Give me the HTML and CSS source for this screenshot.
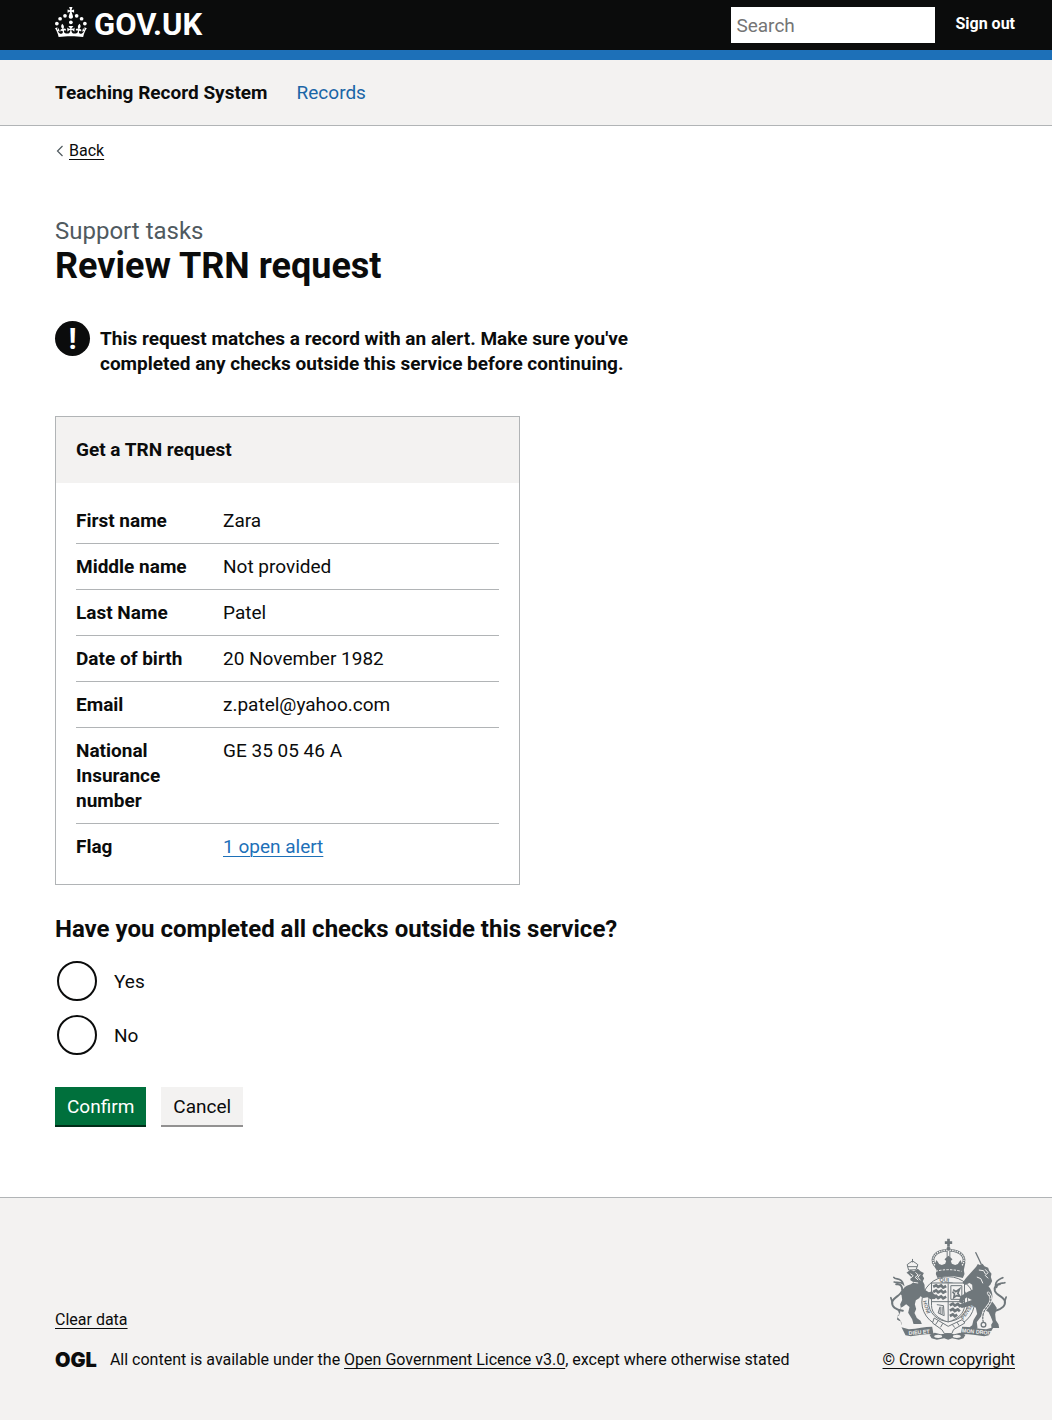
FILE: index.html
```html
<!DOCTYPE html>
<html lang="en">
<head>
<meta charset="utf-8">
<meta name="viewport" content="width=device-width, initial-scale=1">
<title>Review TRN request</title>
<link rel="stylesheet" href="styles.css">
</head>
<body>
<header class="header">
  <div class="container header-inner">
    <a class="logo" href="#">
      <svg class="crown" viewBox="0 0 64 60" aria-hidden="true" fill="currentColor"><circle cx="20" cy="17.6" r="3.7"/><circle cx="10.2" cy="23.5" r="3.7"/><circle cx="3.7" cy="33.2" r="3.7"/><circle cx="31.7" cy="30.6" r="3.7"/><circle cx="43.3" cy="17.6" r="3.7"/><circle cx="53.2" cy="23.5" r="3.7"/><circle cx="59.7" cy="33.2" r="3.7"/><path d="M33.1,9.8c.2-.1.3-.3.5-.5l4.6,2.4v-6.8l-4.6,1.5c-.1-.2-.3-.3-.5-.5l1.9-5.9h-6.7l1.9,5.9c-.2.1-.3.3-.5.5l-4.6-1.5v6.8l4.6-2.4c.1.2.3.3.5.5l-2.6,8c-.9,2.8,1.2,5.7,4.1,5.7h0c3,0,5.1-2.9,4.1-5.7l-2.6-8ZM37,37.9s-3.4,3.8-4.1,6.1c2.2,0,4.2-.5,6.4-2.8l-.7,8.5c-2-2.8-4.4-4.1-5.7-3.8.1,3.1.5,6.7,5.8,7.2,3.7.3,6.7-1.5,7-3.8.4-2.6-2-4.3-3.7-1.6-1.4-4.5,2.4-6.1,4.9-3.2-1.9-4.5-1.8-7.7,2.4-10.9,3,4,2.6,7.3-1.2,11.1,2.4-1.3,6.2,0,4,4.6-1.2-2.8-3.7-2.2-4.2.2-.3,1.7.7,3.7,3,4.2,1.9.3,4.7-.9,7-5.9-1.3,0-2.4.7-3.9,1.7l2.4-8c.6,2.3,1.4,3.7,2.2,4.5.6-1.6.5-2.8,0-5.3l5,1.8c-2.6,3.6-5.2,8.7-7.3,17.5-7.4-1.1-15.7-1.7-24.5-1.7h0c-8.8,0-17.1.6-24.5,1.7-2.1-8.9-4.7-13.9-7.3-17.5l5-1.8c-.5,2.5-.6,3.7,0,5.3.8-.8,1.6-2.3,2.2-4.5l2.4,8c-1.5-1-2.6-1.7-3.9-1.7,2.3,5,5.2,6.2,7,5.9,2.3-.4,3.3-2.4,3-4.2-.5-2.4-3-3.1-4.2-.2-2.2-4.6,1.6-6,4-4.6-3.7-3.7-4.2-7.1-1.2-11.1,4.2,3.2,4.3,6.4,2.4,10.9,2.5-2.8,6.3-1.3,4.9,3.2-1.8-2.7-4.1-1-3.7,1.6.3,2.3,3.3,4.1,7,3.8,5.4-.5,5.7-4.2,5.8-7.2-1.3-.2-3.7,1-5.7,3.8l-.7-8.5c2.2,2.3,4.2,2.7,6.4,2.8-.7-2.3-4.1-6.1-4.1-6.1h10.6Z"/></svg>
      <span class="logo-text">GOV.UK</span>
    </a>
    <form class="search" role="search">
      <input class="search-input" type="search" placeholder="Search" aria-label="Search">
    </form>
    <a class="sign-out" href="#">Sign out</a>
  </div>
</header>
<nav class="service-nav" aria-label="Service">
  <div class="container service-nav-inner">
    <span class="service-name">Teaching Record System</span>
    <a class="service-link" href="#">Records</a>
  </div>
</nav>
<div class="container">
  <a class="back" href="#">
    <svg class="back-arrow" viewBox="0 0 7 12" aria-hidden="true"><path d="M6.500 1 1.500 6l5 5" fill="none" stroke="#505a5f" stroke-width="1.200"/></svg>
    <span class="back-text">Back</span>
  </a>
  <main class="main">
    <span class="caption">Support tasks</span>
    <h1 class="title">Review TRN request</h1>
    <div class="warning">
      <span class="warning-icon" aria-hidden="true">!</span>
      <strong class="warning-text">This request matches a record with an alert. Make sure you've completed any checks outside this service before continuing.</strong>
    </div>
    <section class="card">
      <h2 class="card-title">Get a TRN request</h2>
      <dl class="summary">
        <div class="row"><dt>First name</dt><dd>Zara</dd></div>
        <div class="row"><dt>Middle name</dt><dd>Not provided</dd></div>
        <div class="row"><dt>Last Name</dt><dd>Patel</dd></div>
        <div class="row"><dt>Date of birth</dt><dd>20 November 1982</dd></div>
        <div class="row"><dt>Email</dt><dd>z.patel@yahoo.com</dd></div>
        <div class="row"><dt>National Insurance number</dt><dd>GE 35 05 46 A</dd></div>
        <div class="row"><dt>Flag</dt><dd><a class="alert-link" href="#">1 open alert</a></dd></div>
      </dl>
    </section>
    <form>
      <fieldset class="checks">
        <legend class="checks-title">Have you completed all checks outside this service?</legend>
        <div class="radio"><input type="radio" name="checks" id="checks-yes"><label for="checks-yes">Yes</label></div>
        <div class="radio"><input type="radio" name="checks" id="checks-no"><label for="checks-no">No</label></div>
      </fieldset>
      <div class="buttons">
        <button class="button" type="submit">Confirm</button>
        <button class="button button-secondary" type="button">Cancel</button>
      </div>
    </form>
  </main>
</div>
<footer class="footer">
  <div class="container footer-inner">
    <div class="footer-meta">
      <a class="footer-link" href="#">Clear data</a>
      <div class="licence">
        <span class="ogl">OGL</span>
        <span>All content is available under the <a class="footer-link" href="#">Open Government Licence v3.0</a>, except where otherwise stated</span>
      </div>
    </div>
    <a class="copyright" href="#">
      <svg class="crest" viewBox="36 22 350 306" aria-hidden="true">
        <!-- garter and shield -->
        <g fill="none" stroke="#6f777b">
          <ellipse cx="210" cy="214" rx="79" ry="76" stroke-width="3"/>
          <ellipse cx="210" cy="214" rx="59" ry="58" stroke-width="3"/>
          <path d="M160 157h99v67c0 25-22 42-49 50-28-8-50-25-50-50z" fill="#f3f2f1" stroke-width="3"/>
          <path d="M210 158v116M160 213h99" stroke-width="3"/>
          <path d="M165 168l9-4 6 5 9-5 6 7 9-5M165 184l9-5 6 6 9-5 6 6 9-5M165 201l9-5 6 6 9-5 6 6 9-5M215 224l9-5 6 6 9-5 6 6 9-5M215 240l9-5 6 6 9-5 6 6M215 256l9-5 6 6 7-5" stroke-width="8"/>
          <path d="M218 165h33v41h-33z" stroke-width="3"/>
          <path d="M225 177l8 6 11-8-5 13 6 9-10-2-8 6 2-11-6-7" stroke-width="5"/>
          <path d="M176 222l20 3 2 30-18-8 5-17M186 228v22M192 228v23" stroke-width="3"/>
          <path d="M168 262l42 25 42-20 8 10-34 20-5 12h-22l-8-12-28-20z" fill="#f3f2f1" stroke-width="3"/>
          <path d="M180 270l-8 12M194 278l-7 12M222 281l8 10M236 274l7 11" stroke-width="3"/>
        </g>
        <!-- crown -->
        <g fill="#6f777b">
          <path d="M207 24h8v8h7v8h-7v8h-8v-8h-7v-8h7z"/>
          <circle cx="211" cy="54" r="6"/>
          <path d="M160 94l10 6 5-12 8 12 8 3 10-4 3-8-5-5 12-11 12 11-5 5 3 8 10 4 8-3 8-12 5 12 10-6-5 24 2 12-5 12c-25-7-51-7-76 0l-5-12 2-12z"/>
        </g>
        <g fill="none" stroke="#6f777b">
          <path d="M170 104c-15-23 3-44 36-45M252 104c15-23-3-44-36-45" stroke-width="8"/>
          <path d="M170 104c-15-23 3-44 36-45M252 104c15-23-3-44-36-45" stroke="#f3f2f1" stroke-width="4" stroke-dasharray="4 3"/>
          <path d="M207 60v24M215 60v24" stroke-width="3"/>
          <path d="M172 122q39-10 78 0" stroke="#f3f2f1" stroke-width="3" stroke-dasharray="7 4"/>
        </g>
        <g fill="#6f777b">
          <!-- lion -->
          <path d="M85 126l12-9 10 5 12-8 8 8 10 5-4 8 5 8-4 9 5 10 1 15 12 8 10-3 5 8 9 4-5 11-14 1-9-6-12 2-9-5-4 6-10 6-3 12 4 14-5 12 7 15 11 8 4 10h-25l-4-14-12-20 4-17-10-8-10 7-8 4 0 15-9 10 0 10 12 6 2 9H70l-4-14-10-10 8-5-4-12 8-8-2-12 6-13-2-16c0-16 10-26 28-31l8-6-10-7 3-9-9-9z"/>
          <!-- unicorn -->
          <path d="M294 108l5-8 6 3 8-4 6 8 11 4 3 9 7 9-2 10 4 12-6 12-5 4c11 13 15 30 9 43l8 10 8 12-5 19 2 18 8 12 2 11h-23l-1-10 5-8-6-16-7-14-16-8-5 20-14 18 2 18-12 8h-18l8-12 6-4 4-16 11-18-4-19-12-7-10 3-20 5-8-6 12-8 26-10-16-8-8 8-2 12-13-6 5-17 22-14 14-6-1-15-8-5-14 6-7-7 10-13z"/>
        </g>
        <!-- tails, horn, chain and small crown -->
        <g fill="none" stroke="#6f777b" stroke-linecap="round">
          <path d="M74 240c-22-2-34-13-32-26 3-15 27-19 30-34 2-13-6-22-18-19" stroke-width="6"/>
          <path d="M47 140c5 8 24 0 28 20-8-8-19-4-27-6M42 213l-4-12M70 190l8-6" stroke-width="5"/>
          <path d="M352 240c20-5 31-16 28-29-4-14-26-17-30-31-2-13 5-21 15-19" stroke-width="6"/>
          <path d="M380 156c-8 3-22-2-25 14M374 141c-8 4-20 6-22 22M380 211l4-12" stroke-width="5"/>
          <path d="M293 66l16 34" stroke-width="4"/>
          <path d="M330 187c14 14 8 30-4 43-12 14-14 30-11 42" stroke="#f3f2f1" stroke-width="8"/>
          <path d="M330 187c14 14 8 30-4 43-12 14-14 30-11 42" stroke-width="4" stroke-dasharray="5 5"/>
          <circle cx="316" cy="282" r="7" fill="#f3f2f1" stroke-width="4"/>
          <path d="M91 117l-4-15 8-6 8-5 8 5 8 6-5 14zM103 86v8M90 108h26" stroke-width="3"/>
        </g>
        <g fill="none" stroke="#f3f2f1" stroke-width="3">
          <path d="M97 129l8 6-7 7M112 125l8 8-9 7 9 8M126 131l-7 9 8 9M106 155l14 2M302 118l14 2 6 10M321 116l9 10-9 8 9 9M296 139l12 5 6 14"/>
        </g>
        <!-- motto ribbon -->
        <g fill="#6f777b">
          <path d="M70 290l22 6c26-2 48-8 70-8l4 22c-20-1-45 3-68 7l-16-3z"/>
          <path d="M346 290l-22 6c-26-2-48-8-72-8l-4 22c22-1 46 3 70 7l14-3z"/>
          <path d="M154 312l16-6 18 5 20-3 20 3 18-5 16 6-6 11-14 4-20-4-12 4-12-4-22 4-16-4z"/>
        </g>
        <g fill="#f3f2f1"><ellipse cx="180" cy="317" rx="12" ry="5"/><ellipse cx="236" cy="317" rx="12" ry="5"/></g>
        <g class="crest-letters">
          <text x="184" y="155" fill="#6f777b">QUI</text>
          <text x="92" y="313" fill="#f3f2f1" transform="rotate(-5 92 313)">DIEU ET</text>
          <text x="251" y="305" fill="#f3f2f1" transform="rotate(5 251 305)">MON DROIT</text>
          <text x="134" y="212" fill="#6f777b" transform="rotate(72 134 212)">HONI</text>
          <text x="255" y="268" fill="#6f777b" transform="rotate(-55 255 268)">PENSE</text>
        </g>
      </svg>
      <span class="copyright-text">© Crown copyright</span>
    </a>
  </div>
</footer>
</body>
</html>
```

FILE: styles.css
```css
*, *::before, *::after { box-sizing: border-box; }

body {
  margin: 0;
  background: #fff;
  color: #0b0c0c;
  font-family: Roboto, "Liberation Sans", sans-serif;
  font-size: 19px;
  line-height: 25px;
}

h1, h2, dl, dd { margin: 0; }
a { color: inherit; }

.container {
  max-width: 1052px;
  margin: 0 auto;
  padding: 0 37px 0 55px;
}

.header {
  background: #0b0c0c;
  color: #fff;
  border-bottom: 10px solid #1d70b8;
}
.header-inner {
  display: flex;
  align-items: center;
  height: 50px;
}
.logo {
  display: flex;
  align-items: center;
  gap: 7px;
  margin-right: auto;
  padding-bottom: 6px;
  text-decoration: none;
}
.crown { width: 32px; height: 30px; }
.logo-text {
  font-size: 31px;
  line-height: 30px;
  font-weight: 700;
  padding-top: 6px;
}
.search { display: flex; }
.search-input {
  width: 204px;
  height: 36px;
  padding: 0 5px;
  border: 0;
  border-radius: 0;
  background: #fff;
  font: inherit;
  appearance: none;
}
.search-input::placeholder { color: #757575; }
.sign-out {
  margin-left: 20px;
  padding-bottom: 4px;
  font-size: 16px;
  font-weight: 700;
  text-decoration: none;
}

.service-nav {
  background: #f3f2f1;
  border-bottom: 1px solid #b1b4b6;
}
.service-nav-inner {
  display: flex;
  gap: 29px;
  padding-top: 20px;
  padding-bottom: 20px;
}
.service-name { font-weight: 700; }
.service-link { color: #1a65a6; text-decoration: none; }

.back {
  display: flex;
  width: fit-content;
  align-items: center;
  gap: 6px;
  margin-top: 15px;
  padding-left: 1px;
  font-size: 16px;
  line-height: 20px;
  text-decoration: none;
}
.back-arrow { width: 7px; height: 12px; }
.back-text { text-decoration: underline; text-underline-offset: 3px; text-decoration-thickness: 1px; }

.main { padding: 55px 0 70px; }
.caption {
  display: block;
  color: #505a5f;
  font-size: 24px;
  line-height: 30px;
}
.title {
  font-size: 36px;
  line-height: 40px;
  font-weight: 700;
}
.warning {
  display: flex;
  align-items: flex-start;
  gap: 10px;
  max-width: 600px;
  margin: 35px 0 40px;
}
.warning-icon {
  flex: none;
  width: 35px;
  height: 35px;
  border-radius: 50%;
  background: #0b0c0c;
  color: #fff;
  font-size: 30px;
  line-height: 36px;
  font-weight: 700;
  text-align: center;
}
.warning-text { padding-top: 5px; }

.card {
  max-width: 465px;
  border: 1px solid #b1b4b6;
}
.card-title {
  padding: 20px;
  background: #f3f2f1;
  border-bottom: 1px solid #f3f2f1;
  font-size: 19px;
  line-height: 25px;
  font-weight: 700;
}
.summary { padding: 15px 20px; }
.row {
  display: grid;
  grid-template-columns: 127px 1fr;
  gap: 20px;
  padding: 10px 0;
  border-bottom: 1px solid #b1b4b6;
}
.row:last-child { border-bottom: 0; }
dt { font-weight: 700; }
.alert-link { color: #1d70b8; text-underline-offset: 3px; text-decoration-thickness: 1px; }

.checks {
  min-width: 0;
  margin: 29px 0 32px;
  padding: 0;
  border: 0;
}
.checks-title {
  margin-bottom: 17px;
  padding: 0;
  font-size: 24px;
  line-height: 30px;
  font-weight: 700;
}
.radio {
  display: flex;
  align-items: center;
  gap: 17px;
  margin: 0 0 14px 2px;
}
.radio:last-child { margin-bottom: 0; }
.radio input {
  appearance: none;
  width: 40px;
  height: 40px;
  margin: 0;
  border: 2px solid #0b0c0c;
  border-radius: 50%;
  background: #fff;
}
.radio input:checked { box-shadow: inset 0 0 0 8px #fff; background: #0b0c0c; }

.buttons { display: flex; gap: 15px; }
.button {
  height: 40px;
  padding: 0 12px;
  border: 0;
  border-bottom: 2px solid #002d18;
  background: #00703c;
  color: #fff;
  font: inherit;
}
.button-secondary {
  background: #f3f2f1;
  border-color: #929191;
  color: #0b0c0c;
}

.footer {
  padding: 40px 0 50px;
  background: #f3f2f1;
  border-top: 1px solid #b1b4b6;
  font-size: 16px;
  line-height: 20px;
}
.footer-inner {
  display: flex;
  align-items: flex-end;
  justify-content: space-between;
}
.footer-meta {
  display: flex;
  flex-direction: column;
  align-items: flex-start;
  gap: 20px;
}
.footer-link, .copyright-text { text-decoration: underline; text-underline-offset: 3px; text-decoration-thickness: 1px; }
.licence { display: flex; gap: 13px; }
.ogl { font-family: Inter, sans-serif; font-size: 20px; font-weight: 900; }
.copyright {
  display: flex;
  flex-direction: column;
  align-items: center;
  gap: 10px;
  text-decoration: none;
}
.crest { width: 117px; height: 102px; }
.crest-letters { font-family: "Liberation Sans", sans-serif; font-size: 16px; font-weight: 700; }
```
